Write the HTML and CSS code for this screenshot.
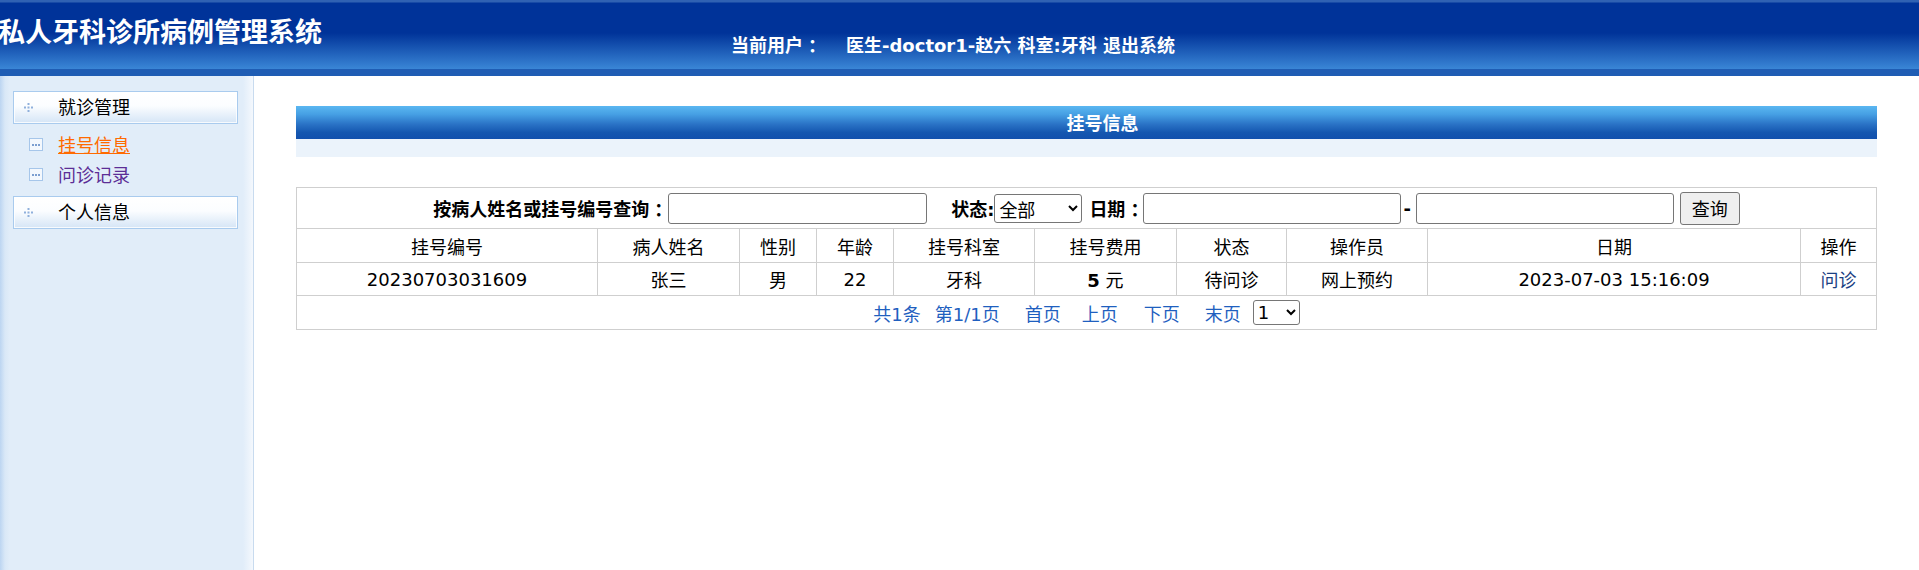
FILE: index.html
```html
<!DOCTYPE html>
<html lang="zh-CN">
<head>
<meta charset="utf-8">
<title>私人牙科诊所病例管理系统</title>
<link rel="stylesheet" href="styles.css">
</head>
<body>
<header class="top">
  <div class="logo">私人牙科诊所病例管理系统</div>
  <div class="user"><span class="lbl">当前用户<span class="colon">：</span></span><span class="who">医生-doctor1-赵六 科室:牙科 <a class="logout" href="#">退出系统</a></span></div>
</header>
<div class="frame">
  <aside class="side">
    <div class="menu-head"><svg class="plus" width="9" height="9" viewBox="0 0 9 9"><rect x="3.5" y="0" width="2" height="2" fill="#8fb0dc"/><rect x="0" y="3.5" width="2" height="2" fill="#8fb0dc"/><rect x="3.5" y="3.5" width="2" height="2" fill="#8fb0dc"/><rect x="7" y="3.5" width="2" height="2" fill="#8fb0dc"/><rect x="3.5" y="7" width="2" height="2" fill="#8fb0dc"/></svg><span>就诊管理</span></div>
    <ul class="menu-items">
      <li><svg class="sq" width="14" height="13" viewBox="0 0 14 13"><rect x="0.5" y="0.5" width="13" height="12" fill="#f4f8fd" stroke="#a6c6ea"/><rect x="3" y="6" width="2" height="2" fill="#7d9fd0"/><rect x="6" y="6" width="2" height="2" fill="#7d9fd0"/><rect x="9" y="6" width="2" height="2" fill="#7d9fd0"/></svg><a class="cur" href="#">挂号信息</a></li>
      <li><svg class="sq" width="14" height="13" viewBox="0 0 14 13"><rect x="0.5" y="0.5" width="13" height="12" fill="#f4f8fd" stroke="#a6c6ea"/><rect x="3" y="6" width="2" height="2" fill="#7d9fd0"/><rect x="6" y="6" width="2" height="2" fill="#7d9fd0"/><rect x="9" y="6" width="2" height="2" fill="#7d9fd0"/></svg><a class="vis" href="#">问诊记录</a></li>
    </ul>
    <div class="menu-head"><svg class="plus" width="9" height="9" viewBox="0 0 9 9"><rect x="3.5" y="0" width="2" height="2" fill="#8fb0dc"/><rect x="0" y="3.5" width="2" height="2" fill="#8fb0dc"/><rect x="3.5" y="3.5" width="2" height="2" fill="#8fb0dc"/><rect x="7" y="3.5" width="2" height="2" fill="#8fb0dc"/><rect x="3.5" y="7" width="2" height="2" fill="#8fb0dc"/></svg><span>个人信息</span></div>
  </aside>
  <main class="main">
    <div class="bar">挂号信息</div>
    <div class="band"></div>
    <table class="grid">
      <colgroup>
        <col class="c1"><col class="c2"><col class="c3"><col class="c4"><col class="c5">
        <col class="c6"><col class="c7"><col class="c8"><col class="c9"><col class="c10">
      </colgroup>
      <tr class="search">
        <td colspan="10">
          <form class="query">
            <b class="q-lbl">按病人姓名或挂号编号查询<span class="colon">：</span></b><input class="txt t-name" type="text">
            <b class="q-state">状态:</b><select class="sel-state"><option>全部</option><option>待问诊</option><option>已问诊</option></select>
            <b class="q-date">日期<span class="colon">：</span></b><input class="txt t-date" type="text"><b class="dash">-</b><input class="txt t-date" type="text">
            <button class="btn" type="button">查询</button>
          </form>
        </td>
      </tr>
      <tr class="head">
        <td>挂号编号</td><td>病人姓名</td><td>性别</td><td>年龄</td><td>挂号科室</td><td>挂号费用</td><td>状态</td><td>操作员</td><td>日期</td><td>操作</td>
      </tr>
      <tr class="row">
        <td>20230703031609</td><td>张三</td><td>男</td><td>22</td><td>牙科</td><td><b>5</b> 元</td><td>待问诊</td><td>网上预约</td><td>2023-07-03 15:16:09</td><td><a class="op" href="#">问诊</a></td>
      </tr>
      <tr class="pager">
        <td colspan="10">
          <div class="pages">
            <span class="pi">共1条</span>
            <span class="pi p2">第1/1页</span>
            <a class="pi p3" href="#">首页</a>
            <a class="pi p4" href="#">上页</a>
            <a class="pi p5" href="#">下页</a>
            <a class="pi p6" href="#">末页</a>
            <select class="sel-page"><option>1</option></select>
          </div>
        </td>
      </tr>
    </table>
  </main>
</div>
</body>
</html>
```
FILE: styles.css
```css
* { box-sizing: border-box; }
html, body { margin: 0; padding: 0; }
body {
  font-family: "DejaVu Sans", "Noto Sans CJK SC", sans-serif;
  font-size: 18px;
  color: #000;
  background: #fff;
  height: 570px;
  overflow: hidden;
}
.colon {
  font-family: "Noto Sans CJK TC", sans-serif;
  padding-left: 5px;
  margin-right: -5px;
}

/* header */
.top {
  height: 76px;
  display: flex;
  align-items: flex-start;
  color: #fff;
  background: linear-gradient(to bottom,
    #3062b3 0, #3062b3 2px,
    #003399 3px, #003399 33px,
    #3a86d6 69px,
    #1f5db4 69px, #1f5db4 76px);
}
.logo {
  font-family: "Noto Sans CJK SC", sans-serif;
  font-weight: bold;
  font-size: 27px;
  line-height: 36px;
  padding-top: 13px;
  margin-left: -2px;
  white-space: nowrap;
}
.user {
  font-weight: bold;
  font-size: 18px;
  line-height: 22px;
  padding-top: 33px;
  margin-left: 409px;
  white-space: nowrap;
}
.user .lbl { margin-right: 25px; }
.user .logout { color: #fff; text-decoration: none; }

/* frame */
.frame {
  display: flex;
  height: 494px;
}
.side {
  width: 254px;
  flex: none;
  border-right: 1px solid #c8dbef;
  padding-top: 15px;
  background: linear-gradient(to right, #bcd5f1 0, #d9e8f7 5px, #e1edf9 10px, #e1edf9 243px, #f4f8fd 253px);
}
.menu-head {
  margin-left: 13px;
  width: 225px;
  height: 33px;
  border: 1px solid #a9cbee;
  box-shadow: inset 0 0 0 1px rgba(255,255,255,0.8);
  background: linear-gradient(to bottom, #ffffff 0, #fbfdff 45%, #d5e5f6 100%);
  display: flex;
  align-items: center;
  padding-left: 10px;
  padding-bottom: 3px;
  font-size: 18px;
  font-family: "Noto Sans CJK SC", sans-serif;
  line-height: 1;
}
.menu-head .plus { margin-right: 25px; flex: none; margin-top: 2px; }
.menu-items {
  list-style: none;
  margin: 5px 0 7px;
  padding: 0;
}
.menu-items li {
  height: 30px;
  display: flex;
  align-items: center;
  padding-left: 29px;
  font-family: "Noto Sans CJK SC", sans-serif;
  font-size: 18px;
}
.menu-items .sq { margin-right: 15px; flex: none; }
.menu-items .cur { color: #ff6a00; text-decoration: underline; }
.menu-items .vis { color: #5c2e96; text-decoration: none; }

/* main */
.main {
  flex: 1;
  padding: 30px 43px 0 42px;
}
.bar {
  height: 33px;
  line-height: 33px;
  padding-left: 32px;
  text-align: center;
  color: #fff;
  font-weight: bold;
  font-family: "Noto Sans CJK SC", sans-serif;
  font-size: 18px;
  background: linear-gradient(to bottom, #5bb7f1 0, #46a0e4 25%, #2a73c6 55%, #1557b0 80%, #1150ad 100%);
}
.band {
  height: 18px;
  background: #ebf3fb;
}
.grid {
  margin-top: 30px;
  width: 1580px;
  border-collapse: collapse;
  table-layout: fixed;
}
.grid td {
  border: 1px solid #cfcfcf;
  text-align: center;
  padding: 0;
  white-space: nowrap;
}
.c1 { width: 301px; }
.c2 { width: 142px; }
.c3 { width: 77px; }
.c4 { width: 77px; }
.c5 { width: 141px; }
.c6 { width: 142px; }
.c7 { width: 110px; }
.c8 { width: 141px; }
.c9 { width: 373px; }
.c10 { width: 76px; }

.search td { height: 41px; }
.head td { height: 34px; }
.row td { height: 33px; }
.pager td { height: 34px; }

.query {
  display: flex;
  justify-content: center;
  align-items: center;
  margin: 0;
}
.query b { font-weight: bold; }
.txt {
  height: 31px;
  border: 1px solid #767676;
  border-radius: 3px;
  background: #fff;
  padding: 0 4px;
  font: inherit;
}
.t-name { width: 259px; margin-left: 1px; }
.t-date { width: 258px; }
.q-state { margin-left: 24px; }
.sel-state {
  width: 88px;
  height: 29px;
  font: 18px "Noto Sans CJK SC", sans-serif;
  border: 1px solid #767676;
  border-radius: 3px;
  background: #fff;
  color: #000;
}
.q-date { margin-left: 7px; }
.dash { margin: 0 5px 0 2px; }
.btn {
  margin-left: 6px;
  width: 60px;
  height: 33px;
  font: 18px "Noto Sans CJK SC", sans-serif;
  border: 1px solid #767676;
  border-radius: 3px;
  background: #efefef;
  color: #000;
  padding: 0;
}
.op { color: #1b3f83; text-decoration: none; }

.pages {
  display: flex;
  justify-content: center;
  align-items: center;
  color: #1f5fbf;
}
.pi { color: #1f5fbf; text-decoration: none; }
.p2 { margin-left: 14px; }
.p3 { margin-left: 25px; }
.p4 { margin-left: 21px; }
.p5 { margin-left: 26px; }
.p6 { margin-left: 25px; }
.sel-page {
  margin-left: 12px;
  width: 47px;
  height: 25px;
  font: 18px "DejaVu Sans", sans-serif;
  border: 1px solid #767676;
  border-radius: 3px;
  background: #fff;
  color: #000;
}
```
